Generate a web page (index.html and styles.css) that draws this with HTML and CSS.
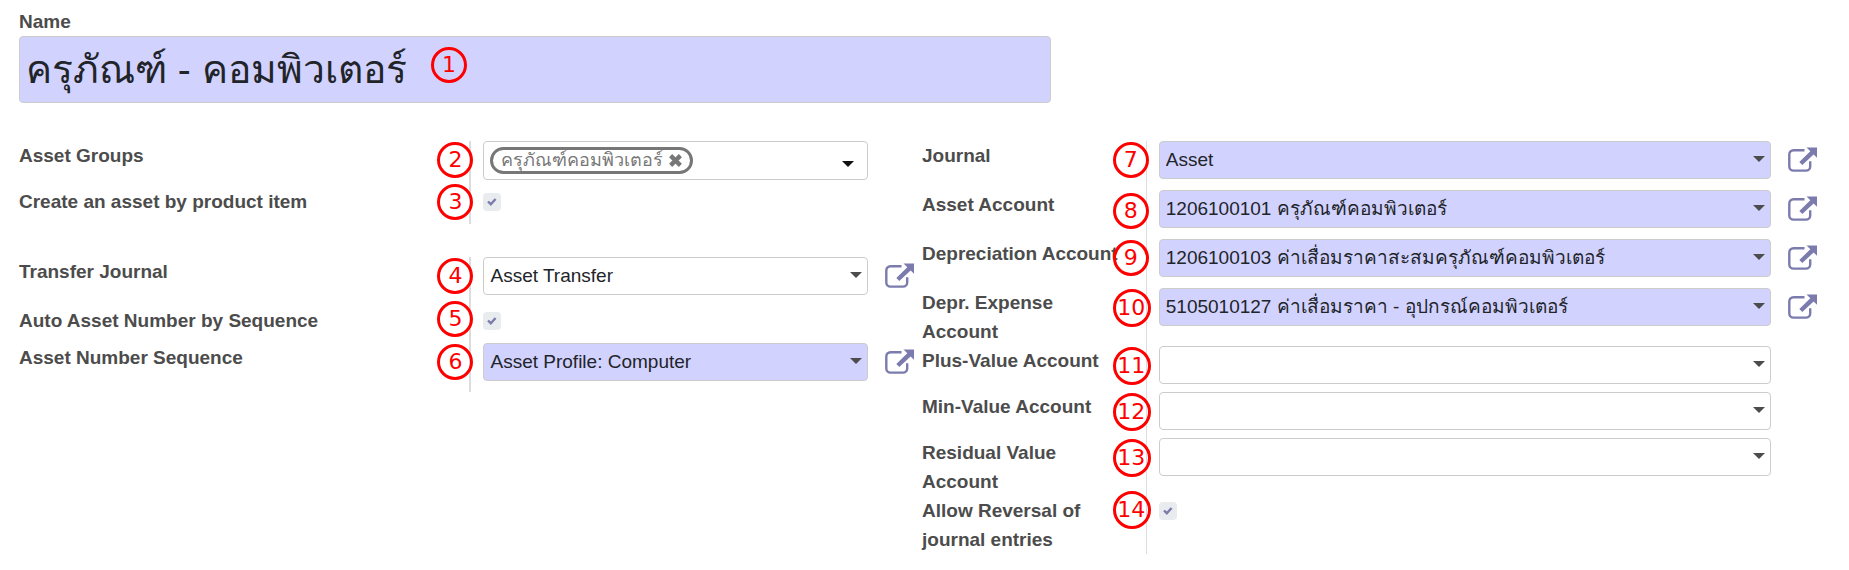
FILE: index.html
```html
<!DOCTYPE html>
<html lang="th">
<head>
<meta charset="utf-8">
<title>Asset Profile</title>
<link rel="stylesheet" href="styles.css">
</head>
<body>
<svg class="sprite" aria-hidden="true">
  <symbol id="external" viewBox="0 0 29 25">
    <path d="M16.500 3.200H5.500a4.200 4.200 0 0 0-4.200 4.200v12a4.200 4.200 0 0 0 4.200 4.200h12.500a4.200 4.200 0 0 0 4.200-4.200v-5.200" fill="none" stroke="currentColor" stroke-width="2.400"/>
    <path d="M18.500.500H29v10.300l-3.400-3.300L14.300 18l-3-3L22.300 4.200z" fill="currentColor"/>
  </symbol>
</svg>
<form class="sheet">
  <div class="title">
    <label class="label" for="name">Name</label>
    <div class="title-box">
      <input class="title-input" id="name" type="text" value="ครุภัณฑ์ - คอมพิวเตอร์">
      <span class="marker marker-title">1</span>
    </div>
  </div>

  <div class="columns">
    <div class="column">
      <div class="group">
        <label class="label" for="groups">Asset Groups</label>
        <div class="cell">
          <span class="marker">2</span>
          <div class="field tags">
            <span class="tag">ครุภัณฑ์คอมพิวเตอร์<button class="tag-remove" type="button" aria-label="Remove"><svg viewBox="0 0 12 12"><path d="M1.500 1.500l9 9M10.500 1.500l-9 9" stroke="currentColor" stroke-width="4"/></svg></button></span>
            <input class="tag-input" id="groups" type="text">
            <span class="caret caret-tags"></span>
          </div>
        </div>
        <label class="label" for="by-item">Create an asset by product item</label>
        <div class="cell cell-check">
          <span class="marker marker-high">3</span>
          <input class="check" id="by-item" type="checkbox" checked>
        </div>
      </div>

      <div class="group">
        <label class="label" for="transfer">Transfer Journal</label>
        <div class="cell">
          <span class="marker">4</span>
          <div class="field"><select class="select" id="transfer"><option>Asset Transfer</option></select><span class="caret"></span></div>
          <button class="open" type="button" aria-label="External link"><svg><use href="#external"/></svg></button>
        </div>
        <label class="label" for="auto">Auto Asset Number by Sequence</label>
        <div class="cell cell-check">
          <span class="marker marker-higher">5</span>
          <input class="check" id="auto" type="checkbox" checked>
        </div>
        <label class="label" for="sequence">Asset Number Sequence</label>
        <div class="cell">
          <span class="marker">6</span>
          <div class="field required"><select class="select" id="sequence"><option>Asset Profile: Computer</option></select><span class="caret"></span></div>
          <button class="open" type="button" aria-label="External link"><svg><use href="#external"/></svg></button>
        </div>
      </div>
    </div>

    <div class="column">
      <div class="group group-accounts">
        <label class="label" for="journal">Journal</label>
        <div class="cell">
          <span class="marker">7</span>
          <div class="field required"><select class="select" id="journal"><option>Asset</option></select><span class="caret"></span></div>
          <button class="open" type="button" aria-label="External link"><svg><use href="#external"/></svg></button>
        </div>
        <label class="label" for="asset">Asset Account</label>
        <div class="cell">
          <span class="marker marker-low">8</span>
          <div class="field required"><select class="select" id="asset"><option>1206100101 ครุภัณฑ์คอมพิวเตอร์</option></select><span class="caret"></span></div>
          <button class="open" type="button" aria-label="External link"><svg><use href="#external"/></svg></button>
        </div>
        <label class="label" for="depreciation">Depreciation Account</label>
        <div class="cell">
          <span class="marker">9</span>
          <div class="field required"><select class="select" id="depreciation"><option>1206100103 ค่าเสื่อมราคาสะสมครุภัณฑ์คอมพิวเตอร์</option></select><span class="caret"></span></div>
          <button class="open" type="button" aria-label="External link"><svg><use href="#external"/></svg></button>
        </div>
        <label class="label" for="expense">Depr. Expense Account</label>
        <div class="cell">
          <span class="marker marker-wide">10</span>
          <div class="field required"><select class="select" id="expense"><option>5105010127 ค่าเสื่อมราคา - อุปกรณ์คอมพิวเตอร์</option></select><span class="caret"></span></div>
          <button class="open" type="button" aria-label="External link"><svg><use href="#external"/></svg></button>
        </div>
        <label class="label" for="plus">Plus-Value Account</label>
        <div class="cell cell-empty">
          <span class="marker marker-wide">11</span>
          <div class="field"><select class="select" id="plus"><option></option></select><span class="caret"></span></div>
        </div>
        <label class="label" for="min">Min-Value Account</label>
        <div class="cell cell-empty">
          <span class="marker marker-wide">12</span>
          <div class="field"><select class="select" id="min"><option></option></select><span class="caret"></span></div>
        </div>
        <label class="label" for="residual">Residual Value Account</label>
        <div class="cell cell-empty">
          <span class="marker marker-wide">13</span>
          <div class="field"><select class="select" id="residual"><option></option></select><span class="caret"></span></div>
        </div>
        <label class="label" for="reversal">Allow Reversal of journal entries</label>
        <div class="cell cell-check">
          <span class="marker marker-wide marker-higher">14</span>
          <input class="check" id="reversal" type="checkbox" checked>
        </div>
      </div>
    </div>
  </div>
</form>
</body>
</html>
```
FILE: styles.css
```css
* {
  box-sizing: border-box;
}

body {
  margin: 0;
  background: #fff;
  color: #212529;
  font: 19px/29px "Liberation Sans", sans-serif;
}

button,
input,
select {
  margin: 0;
  padding: 0;
  border: 0;
  background: none;
  color: inherit;
  font: inherit;
}

.sprite {
  position: absolute;
  width: 0;
  height: 0;
}

.sheet {
  padding: 7px 32px 16px 19px;
}

.label {
  color: #4c4c4c;
  font-weight: bold;
}

.title {
  width: 57.4%;
}

.title-box {
  position: relative;
}

.title-input {
  display: block;
  width: 100%;
  height: 67px;
  padding: 0 6px 2px;
  border: 1px solid #ccc;
  border-radius: 4px;
  background: #d2d2ff;
  font-size: 39px;
}

.columns {
  display: grid;
  grid-template-columns: minmax(0, 1fr) minmax(0, 1fr);
  gap: 8px;
  margin-top: 38px;
}

.column {
  display: flex;
  flex-direction: column;
  gap: 33px;
}

.group {
  display: grid;
  grid-template-columns: minmax(0, 451fr) minmax(0, 445fr);
}

.group-accounts {
  grid-template-columns: minmax(0, 1fr) minmax(0, 3fr);
}

.group .label {
  padding-right: 24px;
}

.cell {
  position: relative;
  display: flex;
  align-items: flex-start;
  gap: 17px;
  padding: 0 0 11px 12px;
  border-left: 2px solid #ddd;
}

.group-accounts .cell {
  border-left-width: 1px;
}

.cell-check {
  padding-top: 6px;
  padding-bottom: 13px;
}

.group-accounts .cell-check {
  padding-top: 6px;
}

.group-accounts .cell-empty {
  padding-right: 46px;
  padding-bottom: 8px;
}

.field {
  position: relative;
  flex: 1;
  min-width: 0;
  height: 38px;
  border: 1px solid #ccc;
  border-radius: 4px;
}

.required {
  background: #d2d2ff;
}

.select {
  display: block;
  width: 100%;
  height: 100%;
  padding: 0 24px 2px 6px;
  appearance: none;
}

.caret {
  position: absolute;
  top: 14px;
  right: 5px;
  width: 12px;
  height: 6px;
  background: #4c4c4c;
  clip-path: polygon(0 0, 100% 0, 50% 100%);
  pointer-events: none;
}

.caret-tags {
  top: 19px;
  right: 13px;
  background: #111;
}

.tags {
  display: flex;
  align-items: flex-start;
  height: 39px;
  margin-right: 46px;
  margin-bottom: -4px;
  padding: 5px 32px 0 6px;
}

.tag {
  display: flex;
  align-items: center;
  gap: 6px;
  height: 27px;
  padding: 0 8px;
  border: 3px solid #777;
  border-radius: 14px;
  color: #777;
  font-size: 18px;
  line-height: 21px;
  white-space: nowrap;
}

.tag-remove {
  display: flex;
}

.tag-remove svg {
  width: 13px;
  height: 13px;
}

.tag-input {
  flex: 1;
  min-width: 0;
  height: 27px;
}

.check {
  width: 18px;
  height: 18px;
  border-radius: 4px;
  background: #e9ecef url("data:image/svg+xml,%3Csvg xmlns='http://www.w3.org/2000/svg' viewBox='0 0 18 18'%3E%3Cpath d='M5 8.500l2.800 2.700L12.600 6' fill='none' stroke='%237c7bad' stroke-width='2.400'/%3E%3C/svg%3E");
  appearance: none;
}

.open {
  display: flex;
  margin-top: 6px;
  color: #7c7bad;
}

.open svg {
  width: 29px;
  height: 25px;
}

.marker {
  position: absolute;
  top: 1px;
  left: -34px;
  z-index: 1;
  width: 36px;
  height: 36px;
  border: 3px solid #f00;
  border-radius: 50%;
  color: #f00;
  font: 22px/30px "DejaVu Sans", sans-serif;
  text-align: center;
}

.marker-wide {
  width: 38px;
  height: 38px;
  line-height: 32px;
  text-indent: -1px;
}

.marker-high {
  top: -3px;
}

.marker-higher {
  top: -5px;
}

.marker-low {
  top: 3px;
}

.marker-title {
  top: 11px;
  left: 412px;
}
```
